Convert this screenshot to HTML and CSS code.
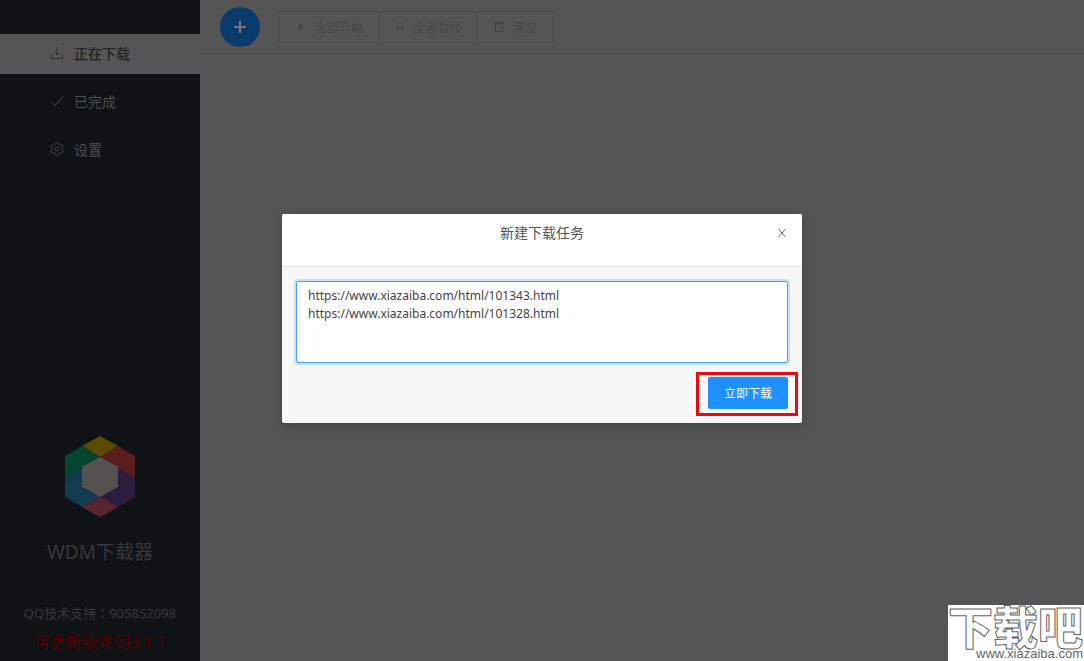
FILE: index.html
```html
<!DOCTYPE html>
<html lang="zh-CN">
<head>
<meta charset="utf-8">
<title>WDM下载器</title>
<link rel="stylesheet" href="styles.css">
</head>
<body>
<div class="app">
  <aside class="sidebar">
    <nav class="menu">
      <a class="menu-item active" href="#downloading">
        <svg class="icon" viewBox="0 0 14 14"><path d="M7 1v8M5 7l2 2 2-2M1.500 8.500v4h11v-4"/></svg>正在下载</a>
      <a class="menu-item" href="#done">
        <svg class="icon" viewBox="0 0 14 14"><path d="M1 7.500l4 4.500L13 2"/></svg>已完成</a>
      <a class="menu-item" href="#settings">
        <svg class="icon" viewBox="0 0 14 14"><path d="M5.500.8h3l.4 1.700 1.300.8 1.700-.5 1.400 2.500L12 6.500v1l1.300 1.200-1.400 2.500-1.700-.5-1.300.8-.4 1.700h-3l-.4-1.700-1.300-.8-1.700.5L.7 8.700 2 7.500v-1L.7 5.300l1.400-2.500 1.700.5 1.300-.8z"/><circle cx="7" cy="7" r="2"/></svg>设置</a>
    </nav>
    <footer class="about">
      <svg class="logo" viewBox="0 0 72 82">
        <path fill="#5b4a00" d="M18 10L36 0l18 10-18 11z"/>
        <path fill="#5b1d1b" d="M54 10l17 10v22L36 21z"/>
        <path fill="#2b1d3d" d="M71 42v19L54 71 36 61z"/>
        <path fill="#5a2530" d="M36 61l18 10-18 10-18-10z"/>
        <path fill="#123a50" d="M1 42v19l17 10 18-10z"/>
        <path fill="#04452f" d="M18 10L1 20v22l35-21z"/>
        <path fill="#2b1d3d" d="M54 31l17 11-17 10z"/>
        <path fill="#5b1d1b" d="M54 31l17 11V20z"/>
        <path fill="#04452f" d="M18 31L1 42V20z"/>
        <path fill="#123a50" d="M18 31L1 42l17 10z"/>
        <path fill="#545250" d="M36 21l18 10v20L36 61 18 51V31z"/>
      </svg>
      <h1 class="name">WDM下载器</h1>
      <p class="support">QQ技术支持<span lang="zh-TW" class="colon">：</span>905852098</p>
      <a class="update" href="#update">可更新版本到3.1.1</a>
    </footer>
  </aside>
  <main class="content">
    <header class="toolbar">
      <button class="add" aria-label="新建"><svg class="plus" viewBox="0 0 14 14"><path d="M7 1v12M1 7h12"/></svg></button>
      <div class="group">
        <button class="tool" disabled><svg class="small" viewBox="0 0 12 12"><path class="solid" d="M4.500 3L8 6 4.500 9z"/></svg>全部开始</button>
        <button class="tool" disabled><svg class="small" viewBox="0 0 12 12"><path d="M3.500 2v8M8.500 2v8"/></svg>全部暂停</button>
        <button class="tool" disabled><svg class="small" viewBox="0 0 12 12"><path d="M1 2.500h10M2.500 2.500v8h7v-8M4.500 2.500V1h3v1.500"/></svg>清空</button>
      </div>
    </header>
  </main>
</div>
<div class="overlay">
  <section class="dialog" role="dialog" aria-labelledby="title">
    <header class="dialog-head">
      <h2 class="dialog-title" id="title">新建下载任务</h2>
      <button class="close" aria-label="关闭"><svg class="cross" viewBox="0 0 10 10"><path d="M1.500 1l7 8M8.500 1l-7 8"/></svg></button>
    </header>
    <div class="dialog-body">
      <textarea class="urls" aria-label="下载地址" spellcheck="false">https://www.xiazaiba.com/html/101343.html
https://www.xiazaiba.com/html/101328.html</textarea>
      <div class="actions"><div class="highlight"><button class="submit">立即下载</button></div></div>
    </div>
  </section>
</div>
<div class="watermark"><span class="mark-name">下载吧</span><span class="mark-url">www.xiazaiba.com</span></div>
</body>
</html>
```
FILE: styles.css
```css
* { box-sizing: border-box; }
body {
  margin: 0;
  font-family: "Noto Sans", "Noto Sans CJK SC", sans-serif;
  font-size: 14px;
  overflow: hidden;
}
button { font: inherit; }
h1, h2, p { margin: 0; font-weight: 400; }
.app { display: flex; min-height: 100vh; background: #555; }
svg { fill: none; stroke: currentColor; }
.sidebar {
  width: 200px;
  display: flex;
  flex-direction: column;
  justify-content: space-between;
  padding: 34px 0 9px;
  background: #0f1315;
}
.menu { display: flex; flex-direction: column; gap: 8px; }
.menu-item {
  display: flex;
  align-items: center;
  gap: 10px;
  height: 40px;
  padding: 0 0 2px 50px;
  color: #4d4f50;
  font-family: "Noto Sans CJK SC", sans-serif;
  text-decoration: none;
}
.menu-item.active { background: #555; color: #222; font-weight: 500; }
.icon { width: 14px; height: 14px; opacity: .85; }
.about { display: flex; flex-direction: column; align-items: center; text-align: center; color: #38393a; }
.logo { width: 72px; height: 82px; stroke: none; }
.name { margin-top: 20px; font-size: 19px; line-height: 28px; }
.support { margin-top: 36px; line-height: 22px; font-size: 13px; }
.colon { font-family: "Noto Sans CJK TC", sans-serif; }
.update { margin-top: 8px; font-size: 16px; line-height: 20px; color: #550000; text-decoration: none; }
.content { flex: 1; }
.toolbar {
  display: flex;
  align-items: center;
  gap: 19px;
  height: 54px;
  padding: 1px 20px 0;
  border-bottom: 1px solid #4d4d4d;
}
.add {
  display: grid;
  place-items: center;
  width: 40px;
  height: 40px;
  padding: 0;
  border: 0;
  border-radius: 50%;
  background: #083b6c;
  color: #777;
}
.plus { width: 14px; height: 14px; stroke-width: 2; }
.group { display: flex; border: 1px solid #4a4a4a; }
.tool {
  display: flex;
  align-items: center;
  gap: 8px;
  height: 30px;
  padding: 0 15px;
  border: 0;
  background: transparent;
  color: #404040;
  font-size: 12px;
  font-weight: 300;
}
.tool + .tool { border-left: 1px solid #4a4a4a; }
.small { width: 12px; height: 12px; }
.solid { fill: currentColor; }
.overlay {
  position: absolute;
  inset: 0;
  display: flex;
  justify-content: center;
  align-items: flex-start;
  padding-top: 214px;
}
.dialog {
  width: 520px;
  background: #f7f7f7;
  border-radius: 2px;
  box-shadow: 0 4px 12px rgba(0, 0, 0, .2);
}
.dialog-head {
  display: grid;
  grid-template-columns: 1fr auto 1fr;
  padding: 8px 14px 23px;
  background: #fff;
  border-bottom: 1px solid #e5e5e5;
  border-radius: 2px 2px 0 0;
}
.dialog-title { grid-column: 2; font-size: 14px; line-height: 21px; color: #555; }
.close {
  justify-self: end;
  display: grid;
  place-items: center;
  width: 12px;
  padding: 0;
  border: 0;
  background: none;
  color: #666;
}
.cross { width: 10px; height: 10px; }
.dialog-body { padding: 14px; }
.urls {
  display: block;
  width: 100%;
  height: 82px;
  padding: 5px 11px;
  border: 1px solid #4aa0ee;
  border-radius: 2px;
  outline: 0;
  box-shadow: 0 0 0 2px #c5e1fa;
  resize: none;
  background: #fff;
  color: #444;
  font-family: "Noto Sans", sans-serif;
  font-size: 12px;
  line-height: 18px;
}
.actions { display: flex; justify-content: flex-end; margin: 9px -10px -7px 0; }
.highlight { padding: 2px 7px 4px 9px; border: 3px solid #e90b0d; }
.submit {
  display: block;
  width: 80px;
  height: 32px;
  padding: 0;
  border: 0;
  border-radius: 2px;
  background: #1e90ff;
  color: #fff;
  font-size: 12px;
}
.watermark {
  position: absolute;
  right: 0;
  bottom: 0;
  display: flex;
  flex-direction: column;
  align-items: flex-end;
  width: 136px;
  height: 56px;
  padding-right: 1px;
  background: #fff;
}
.mark-name {
  font-family: "Noto Sans CJK SC", sans-serif;
  font-size: 45px;
  font-weight: 900;
  line-height: 42px;
  color: #fff;
  -webkit-text-stroke: 1px #666;
}
.mark-url { font-family: "Liberation Sans", sans-serif; font-size: 13px; line-height: 14px; color: #666; }
```
